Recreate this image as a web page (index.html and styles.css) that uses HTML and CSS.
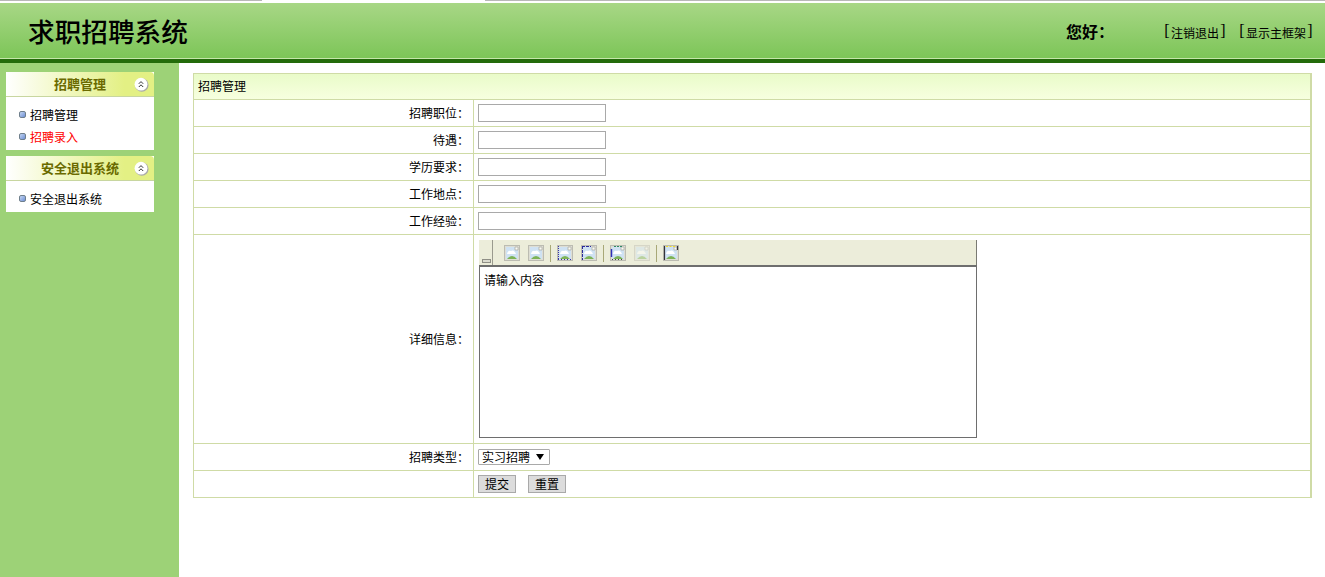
FILE: index.html
```html
<!DOCTYPE html>
<html lang="zh">
<head>
<meta charset="utf-8">
<title>求职招聘系统</title>
<link rel="stylesheet" href="styles.css">
</head>
<body>
<svg class="defs" width="0" height="0" aria-hidden="true">
  <defs>
    <g id="pic">
      <rect x="0.5" y="0.5" width="15" height="15" fill="#deded4" stroke="#bcbcb2"/>
      <path d="M2 2h9l3 3v9H2z" fill="#cfe2f3"/>
      <path d="M3 9 Q4 5 7 6 Q10 4 12 9 Z" fill="#fff"/>
      <path d="M3 14 Q8 8 13 14 Z" fill="#7db356"/>
      <path d="M11 2h3v3h-3z" fill="#fafaf4" stroke="#a8a89e" stroke-width=".7"/>
    </g>
    <symbol id="img" viewBox="0 0 16 16"><use href="#pic"/></symbol>
    <symbol id="img-left" viewBox="0 0 16 16"><use href="#pic"/>
      <path d="M1.5 1v14" stroke="#3434a8" stroke-width="1" stroke-dasharray="1 1"/>
      <path d="M1 14.5h14" stroke="#3434a8" stroke-width="1" stroke-dasharray="1 2"/>
    </symbol>
    <symbol id="img-top" viewBox="0 0 16 16"><use href="#pic"/>
      <path d="M1.5 1v14M1 1.5h9" stroke="#2a2a9c" stroke-width="1" stroke-dasharray="3 1"/>
    </symbol>
    <symbol id="img-mix" viewBox="0 0 16 16"><use href="#pic"/>
      <path d="M1.5 4v8" stroke="#3030b8" stroke-width="1.4"/>
      <path d="M4 1.5h8" stroke="#2e8a66" stroke-width="1" stroke-dasharray="2 1"/>
      <path d="M2 14.5h12" stroke="#444" stroke-width="1" stroke-dasharray="1 2"/>
    </symbol>
    <symbol id="img-yellow" viewBox="0 0 16 16"><use href="#pic"/>
      <path d="M1.5 1v14" stroke="#33333a" stroke-width="1.2"/>
      <path d="M3 1.5h9" stroke="#f0dc28" stroke-width="1.2" stroke-dasharray="2 1.5"/>
      <path d="M14.5 1v4" stroke="#33333a" stroke-width="1.2"/>
    </symbol>
    <symbol id="chev" viewBox="0 0 15 15">
      <circle cx="7.8" cy="8" r="6.8" fill="#aaa"/>
      <circle cx="7" cy="7.2" r="6.4" fill="#fff"/>
      <path d="M4.8 6.8 7 4.6 9.2 6.8M4.8 10 7 7.8 9.2 10" fill="none" stroke="#333" stroke-width="1"/>
    </symbol>
  </defs>
</svg>
<div class="topstrip"><span class="gray g1"></span><span class="gap"></span><span class="gray g2"></span></div>
<header class="header">
  <h1 class="title">求职招聘系统</h1>
  <div class="hello">您好：</div>
  <div class="links"><span class="lnk"><i>[</i>注销退出<i>]</i></span><span class="lnk"><i>[</i>显示主框架<i>]</i></span></div>
</header>
<div class="body">
  <aside class="side">
    <section class="panel">
      <div class="phead"><span class="ptext">招聘管理</span><svg class="chev"><use href="#chev"/></svg></div>
      <ul class="plist l2">
        <li><span class="dot"></span>招聘管理</li>
        <li class="red"><span class="dot"></span>招聘录入</li>
      </ul>
    </section>
    <section class="panel">
      <div class="phead"><span class="ptext">安全退出系统</span><svg class="chev"><use href="#chev"/></svg></div>
      <ul class="plist l1">
        <li><span class="dot"></span>安全退出系统</li>
      </ul>
    </section>
  </aside>
  <main class="main">
    <div class="frame">
      <div class="thead">招聘管理</div>
      <div class="row"><div class="lab">招聘职位：</div><div class="val"><span class="inp"></span></div></div>
      <div class="row"><div class="lab">待遇：</div><div class="val"><span class="inp"></span></div></div>
      <div class="row"><div class="lab">学历要求：</div><div class="val"><span class="inp"></span></div></div>
      <div class="row"><div class="lab">工作地点：</div><div class="val"><span class="inp"></span></div></div>
      <div class="row"><div class="lab">工作经验：</div><div class="val"><span class="inp"></span></div></div>
      <div class="row tall"><div class="lab">详细信息：</div><div class="val">
        <div class="editor">
          <div class="tools">
            <span class="handle"><span class="grip"></span></span>
            <svg class="ic first"><use href="#img"/></svg><svg class="ic"><use href="#img"/></svg><span class="sep"></span>
            <svg class="ic"><use href="#img-left"/></svg><svg class="ic"><use href="#img-top"/></svg><span class="sep"></span>
            <svg class="ic"><use href="#img-mix"/></svg><svg class="ic faded"><use href="#img"/></svg><span class="sep"></span>
            <svg class="ic"><use href="#img-yellow"/></svg>
          </div>
          <div class="area">请输入内容</div>
        </div>
      </div></div>
      <div class="row"><div class="lab">招聘类型：</div><div class="val"><span class="sel">实习招聘<i class="tri"></i></span></div></div>
      <div class="row"><div class="lab"></div><div class="val btns"><span class="btn">提交</span><span class="btn">重置</span></div></div>
    </div>
  </main>
</div>
</body>
</html>
```
FILE: styles.css
```css
* { box-sizing: border-box; }
html, body { margin: 0; height: 100%; }
body {
  font-family: "Noto Sans CJK SC", "Liberation Sans", sans-serif;
  font-size: 12px;
  color: #000;
  background: #fff;
  overflow: hidden;
  display: flex;
  flex-direction: column;
}
.defs { position: absolute; }
.topstrip { height: 3px; display: flex; flex: none; align-items: flex-start; }
.gray { height: 1px; background: #b8b8b8; display: block; }
.g1 { width: 262px; }
.gap { width: 223px; }
.g2 { flex: 1; }
.header {
  flex: none;
  height: 60px;
  display: flex;
  align-items: center;
  background: linear-gradient(#a8d786, #7cc557);
  border-bottom: 4px solid #236b0a;
  box-shadow: inset 0 -1px 0 #c5e6a9;
  padding-left: 28px;
}
.title {
  margin: 0;
  font-family: "Noto Sans CJK SC", sans-serif;
  font-size: 26.67px;
  font-weight: 500;
  line-height: 1;
  width: 1038px;
  flex: none;
}
.hello { font-size: 16px; font-weight: 700; width: 97px; flex: none; line-height: 1; }
.links { display: flex; gap: 11px; font-size: 12px; line-height: 1; padding-top: 3px; }
.lnk { white-space: nowrap; display: flex; align-items: center; }
.lnk i { font-style: normal; font-size: 16px; font-weight: 400; font-family: "Liberation Serif", serif; width: 8px; text-align: center; margin-top: -3px; }
.body { flex: 1; display: flex; min-height: 0; }
.side {
  width: 179px;
  flex: none;
  background: #9dd277;
  padding: 9px 25px 0 6px;
  display: flex;
  flex-direction: column;
  gap: 6px;
}
.panel { background: #fff; }
.phead {
  height: 25px;
  border-bottom: 1px solid #c8d6a0;
  border-radius: 4px 4px 0 0;
  background: linear-gradient(90deg, #fff, #e3f084 80%);
  display: flex;
  align-items: center;
  justify-content: center;
  position: relative;
  font-size: 13px;
  font-weight: 700;
  color: #6a6a00;
  padding-bottom: 2px;
}
.chev { position: absolute; right: 5px; top: 5px; width: 15px; height: 15px; }
.plist { list-style: none; margin: 0; padding: 6px 0 0; }
.plist li { height: 22px; display: flex; align-items: center; padding-left: 13px; gap: 4px; }
.l2 { height: 53px; }
.l1 { height: 31px; }
.red { color: #f00; }
.dot {
  width: 7px; height: 7px; flex: none;
  background: linear-gradient(135deg, #c4d6f2, #6f90d6);
  border: 1px solid #6f7f8c;
  border-radius: 2px;
}
.main { flex: 1; padding: 10px 14px 0; min-width: 0; }
.frame {
  width: 1119px;
  border: 1px solid #cfdba6;
  border-right-width: 2px;
}
.thead {
  height: 26px;
  padding: 0 0 2px 4px;
  display: flex;
  align-items: center;
  background: linear-gradient(#e9fbc9, #f7ffdf);
  border-bottom: 1px solid #cfdba6;
}
.row { display: flex; height: 27px; border-bottom: 1px solid #cfdba6; }
.row:last-child { border-bottom: 0; height: 26px; }
.tall { height: 209px; }
.lab {
  width: 280px;
  flex: none;
  border-right: 1px solid #cfdba6;
  padding: 0 4px 2px 0;
  display: flex;
  align-items: center;
  justify-content: flex-end;
}
.val { flex: 1; display: flex; align-items: center; padding-left: 4px; }
.inp { width: 128px; height: 18px; border: 1px solid #a9a9a9; background: #fff; display: block; }
.editor { width: 498px; margin-left: 1px; }
.tools {
  height: 25px;
  background: #ecedda;
  border-right: 1px solid #7a7a72;
  display: flex;
  align-items: center;
  padding-top: 1px;
}
.handle {
  width: 14px;
  height: 25px;
  margin-top: -1px;
  flex: none;
  border-right: 1px solid #9a9a8e;
  display: flex;
  align-items: flex-end;
  padding: 0 0 2px 3px;
}
.grip {
  width: 9px; height: 4px;
  border: 1px solid #8f8f86;
  background: #dcdcd0;
  display: block;
}
.ic { width: 16px; height: 16px; flex: none; margin: 0 4px; }
.first { margin-left: 11px; }
.faded { opacity: .45; }
.sep { width: 1px; height: 17px; background: #a8a878; flex: none; margin: 0 2px; }
.area {
  height: 173px;
  border: 1px solid #6e6e6e;
  border-top-width: 2px;
  padding: 5px 4px;
  font-size: 12px;
  line-height: 16px;
}
.sel {
  width: 72px; height: 16px;
  border: 1px solid #a9a9a9;
  display: flex;
  align-items: center;
  padding: 0 0 1px 3px;
  border-radius: 1px;
}
.tri {
  width: 0; height: 0;
  border-left: 4px solid transparent;
  border-right: 4px solid transparent;
  border-top: 6px solid #000;
  margin-left: 6px;
}
.btns { gap: 12px; }
.btn {
  width: 38px; height: 18px;
  padding-bottom: 1px;
  background: #dcdcdc;
  border: 1px solid #a9a9a9;
  display: flex;
  align-items: center;
  justify-content: center;
}
```
